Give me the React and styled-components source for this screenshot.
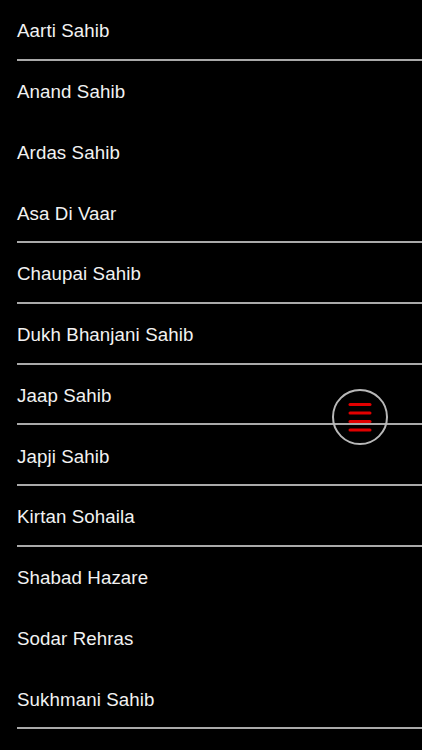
import React from 'react';
import styled, { createGlobalStyle } from 'styled-components';

const GlobalStyle = createGlobalStyle`
  html, body {
    margin: 0;
    padding: 0;
    background: #000;
  }
  body {
    font-family: "Liberation Sans", Arial, sans-serif;
    -webkit-font-smoothing: antialiased;
  }
`;

const Screen = styled.div`
  position: relative;
  width: 422px;
  height: 750px;
  background: #000;
  overflow: hidden;
`;

const List = styled.ul`
  list-style: none;
  margin: 0;
  padding: 0 0 0 17px;
  height: 729px;
  display: grid;
  grid-template-rows: repeat(12, 1fr);
`;

const Row = styled.li`
  display: flex;
  align-items: center;
  padding-top: 4px;
  box-sizing: border-box;
  border-bottom: 2px solid ${({ divider }) => (divider ? '#a9a9a9' : 'transparent')};
  color: #f2f2f2;
  font-size: 18.7px;
  letter-spacing: 0.1px;
`;

const MenuButton = styled.button`
  position: absolute;
  left: 332px;
  top: 389px;
  width: 56px;
  height: 56px;
  padding: 0;
  border: 2px solid #b8b8b8;
  border-radius: 50%;
  background: transparent;
  display: flex;
  align-items: center;
  justify-content: center;
  cursor: pointer;
`;

const items = [
  { title: 'Aarti Sahib', divider: true },
  { title: 'Anand Sahib', divider: false },
  { title: 'Ardas Sahib', divider: false },
  { title: 'Asa Di Vaar', divider: true },
  { title: 'Chaupai Sahib', divider: true },
  { title: 'Dukh Bhanjani Sahib', divider: true },
  { title: 'Jaap Sahib', divider: true },
  { title: 'Japji Sahib', divider: true },
  { title: 'Kirtan Sohaila', divider: true },
  { title: 'Shabad Hazare', divider: false },
  { title: 'Sodar Rehras', divider: false },
  { title: 'Sukhmani Sahib', divider: true },
];

const App = () => (
  <>
    <GlobalStyle />
    <Screen>
      <List>
        {items.map(({ title, divider }) => (
          <Row key={title} divider={divider ? 1 : 0}>
            {title}
          </Row>
        ))}
      </List>
      <MenuButton aria-label="Menu">
        <svg width="24" height="30" viewBox="0 0 24 30">
          {[2.5, 11, 19.5, 28].map((y) => (
            <line key={y} x1="2" y1={y} x2="22" y2={y} stroke="#e10000" strokeWidth="3" strokeLinecap="round" />
          ))}
        </svg>
      </MenuButton>
    </Screen>
  </>
);

export default App;
